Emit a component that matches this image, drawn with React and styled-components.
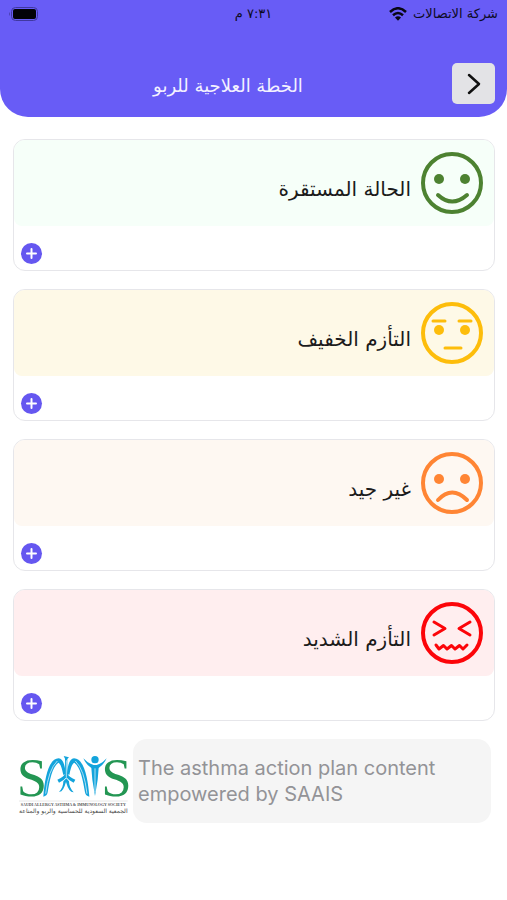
import React from "react";
import styled, { createGlobalStyle } from "styled-components";

const GlobalStyle = createGlobalStyle`
  * { box-sizing: border-box; }
  body {
    margin: 0;
    background: #ffffff;
    font-family: "DejaVu Sans", "Noto Sans", sans-serif;
  }
`;

const Page = styled.div`
  min-height: 100vh;
  background: #ffffff;
`;

const Header = styled.header`
  background: #685cf6;
  border-radius: 0 0 28px 28px;
`;

const StatusBar = styled.div`
  display: grid;
  grid-template-columns: 1fr auto 1fr;
  align-items: center;
  height: 28px;
  padding: 0 9px;
  color: #0d0b24;
  font-size: 13px;
  line-height: 20px;
`;

const Carrier = styled.div`
  display: flex;
  align-items: center;
  gap: 5px;
  white-space: nowrap;
`;

const Battery = styled.div`
  display: flex;
  justify-content: flex-end;
`;

const TitleBar = styled.div`
  display: grid;
  grid-template-columns: 43px 1fr 43px;
  align-items: center;
  padding: 35px 12px 13px;
`;

const BackButton = styled.button`
  display: flex;
  align-items: center;
  justify-content: center;
  width: 43px;
  height: 41px;
  padding: 0;
  border: 0;
  border-radius: 5px;
  background: #e3e3e6;
  cursor: pointer;
`;

const Title = styled.h1`
  margin: 0;
  padding: 4px 51px 0 0;
  color: #f3f1ff;
  font-size: 18px;
  font-weight: 400;
  line-height: 24px;
  text-align: center;
`;

const Main = styled.main`
  display: flex;
  flex-direction: column;
  gap: 18px;
  padding: 22px 12px 0 13px;
`;

const Card = styled.section`
  overflow: hidden;
  border: 1px solid #e6e6ea;
  border-radius: 12px;
  background: #ffffff;
`;

const CardHead = styled.div`
  display: flex;
  align-items: center;
  gap: 10px;
  height: 86px;
  padding: 0 11px;
  border-radius: 0 0 8px 8px;
  background: ${(p) => p.$tint};
`;

const CardTitle = styled.h2`
  margin: 0;
  padding-top: 12px;
  color: #1b1b1b;
  font-size: 20px;
  font-weight: 400;
  line-height: 28px;
`;

const CardFoot = styled.div`
  display: flex;
  justify-content: flex-end;
  padding: 17px 7px 6px;
`;

const AddButton = styled.button`
  display: flex;
  width: 21px;
  height: 21px;
  padding: 0;
  border: 0;
  border-radius: 50%;
  background: #6557f0;
  cursor: pointer;
`;

const Credit = styled.footer`
  display: flex;
  align-items: center;
  gap: 1px;
  padding: 0 4px 0 3px;
`;

const CreditText = styled.p`
  flex: 1;
  min-height: 84px;
  margin: 0;
  padding: 16px 5px;
  border-radius: 14px;
  background: #f5f5f5;
  color: #939397;
  font-family: "Inter", "Open Sans", sans-serif;
  font-size: 20px;
  line-height: 26px;
`;

const faces = {
  happy: (
    <>
      <circle cx="18" cy="27" r="5" fill="currentColor" stroke="none" />
      <circle cx="44" cy="27" r="5" fill="currentColor" stroke="none" />
      <path d="M17 43 Q31 56 46 43" strokeWidth="4" />
    </>
  ),
  neutral: (
    <>
      <circle cx="18" cy="28" r="5" fill="currentColor" stroke="none" />
      <circle cx="44" cy="28" r="5" fill="currentColor" stroke="none" />
      <path d="M12 19H24M38 19H50M24 46H40" strokeWidth="3" />
    </>
  ),
  sad: (
    <>
      <circle cx="18" cy="27" r="5" fill="currentColor" stroke="none" />
      <circle cx="44" cy="27" r="5" fill="currentColor" stroke="none" />
      <path d="M17 48 Q31 33 46 48" strokeWidth="4" />
    </>
  ),
  severe: (
    <>
      <path d="M13 20L24 26.500L13 33M49 20L38 26.500L49 33" strokeWidth="3" />
      <path d="M15 43L18 47L22.500 43.500L26 47L30.500 43.500L34 47L38.500 43.500L42 47L46 43" strokeWidth="3" />
    </>
  ),
};

function Face({ kind, color }) {
  return (
    <svg width="62" height="62" viewBox="0 0 62 62" fill="none" color={color} stroke="currentColor" strokeLinecap="round" strokeLinejoin="round" aria-hidden="true">
      <circle cx="31" cy="31" r="29" strokeWidth="4" />
      {faces[kind]}
    </svg>
  );
}

function WifiIcon() {
  return (
    <svg width="20" height="14" viewBox="0 0 18 14" fill="none" stroke="#080714" strokeWidth="2.500" aria-hidden="true">
      <path d="M1 5Q9 -2.500 17 5" />
      <path d="M4 8.300Q9 3.800 14 8.300" />
      <path d="M6 10.500Q9 8 12 10.500L9 13.800Z" fill="#080714" stroke="none" />
    </svg>
  );
}

function BatteryIcon() {
  return (
    <svg width="30" height="14" viewBox="0 0 30 14" aria-hidden="true">
      <rect x="2.500" y="0.500" width="26" height="13" rx="4" fill="none" stroke="#4038a0" />
      <rect x="4" y="2" width="23" height="10" rx="2" fill="#030208" />
      <path d="M1 5Q-0.500 7 1 9Z" fill="#4038a0" />
    </svg>
  );
}

function SaaisLogo() {
  return (
    <svg width="116" height="72" viewBox="48 26 348 216" role="img" aria-label="SAAIS" direction="ltr">
      <g fill="#239653" fontFamily="Liberation Serif, serif" fontSize="164">
        <text x="50" y="179">S</text>
        <text x="304" y="179">S</text>
      </g>
      <g fill="#13a4dc">
        <path d="M130 181C134 126 146 66 176 66C190 67 195 88 197 112L190 116C186 96 182 82 175 79C157 90 148 135 143 168Q141 179 130 181Z" />
        <path d="M268 181C264 126 252 66 222 66C208 67 203 88 201 112L208 116C212 96 216 82 223 79C241 90 250 135 255 168Q257 179 268 181Z" />
        <path d="M191 59L207 63L202 68V111Q206 123 226 130L221 139Q205 132 199 123Q193 132 177 139L172 130Q192 123 195 111V67Z" />
        <path d="M190 135Q190 155 177 166Q189 169 198 137Q207 169 221 168Q207 153 207 135L199 126Z" />
        <circle cx="285" cy="70" r="11" />
        <path d="M250 66Q265 82 281 86H290Q306 82 320 66Q312 84 296 95L293 130L285 179L277 130L274 95Q258 85 250 66Z" />
      </g>
      <g fill="none" stroke="#ffffff" strokeWidth="2">
        <path d="M199 72V122M285 96V168" />
        <path d="M172 74Q145 100 137 172M226 74Q253 100 261 172" />
      </g>
      <path d="M57 194H383" stroke="#dddddd" strokeWidth="2" />
      <text x="220" y="209" textAnchor="middle" fill="#555555" fontFamily="Liberation Serif, serif" fontWeight="700" fontSize="12">SAUDI ALLERGY ASTHMA &amp; IMMUNOLOGY SOCIETY</text>
      <text x="220" y="230" textAnchor="middle" fill="#444444" fontFamily="DejaVu Sans, sans-serif" fontSize="18" direction="rtl">الجمعية السعودية للحساسية والربو والمناعة</text>
    </svg>
  );
}

const stages = [
  { title: "الحالة المستقرة", kind: "happy", color: "#4d8231", tint: "#f6fff9" },
  { title: "التأزم الخفيف", kind: "neutral", color: "#fdbd0b", tint: "#fef9e7" },
  { title: "غير جيد", kind: "sad", color: "#ff8534", tint: "#fef8f2" },
  { title: "التأزم الشديد", kind: "severe", color: "#fc0509", tint: "#ffeeef" },
];

export default function App() {
  return (
    <Page dir="rtl" lang="ar">
      <GlobalStyle />
      <Header>
        <StatusBar>
          <Carrier>
            <span>شركة الاتصالات</span>
            <WifiIcon />
          </Carrier>
          <span>٧:٣١ م</span>
          <Battery>
            <BatteryIcon />
          </Battery>
        </StatusBar>
        <TitleBar>
          <BackButton type="button" aria-label="رجوع">
            <svg width="14" height="22" viewBox="0 0 14 22" fill="none" stroke="#101010" strokeWidth="2.500" strokeLinecap="round" strokeLinejoin="round">
              <path d="M2 2L12 11L2 20" />
            </svg>
          </BackButton>
          <Title>الخطة العلاجية للربو</Title>
        </TitleBar>
      </Header>
      <Main>
        {stages.map((s) => (
          <Card key={s.kind}>
            <CardHead $tint={s.tint}>
              <Face kind={s.kind} color={s.color} />
              <CardTitle>{s.title}</CardTitle>
            </CardHead>
            <CardFoot>
              <AddButton type="button" aria-label={`إضافة ${s.title}`}>
                <svg width="21" height="21" viewBox="0 0 21 21" fill="none" stroke="#ffffff" strokeWidth="2" strokeLinecap="round">
                  <path d="M10.500 6V15M6 10.500H15" />
                </svg>
              </AddButton>
            </CardFoot>
          </Card>
        ))}
        <Credit dir="ltr" lang="en">
          <SaaisLogo />
          <CreditText>The asthma action plan content empowered by SAAIS</CreditText>
        </Credit>
      </Main>
    </Page>
  );
}
